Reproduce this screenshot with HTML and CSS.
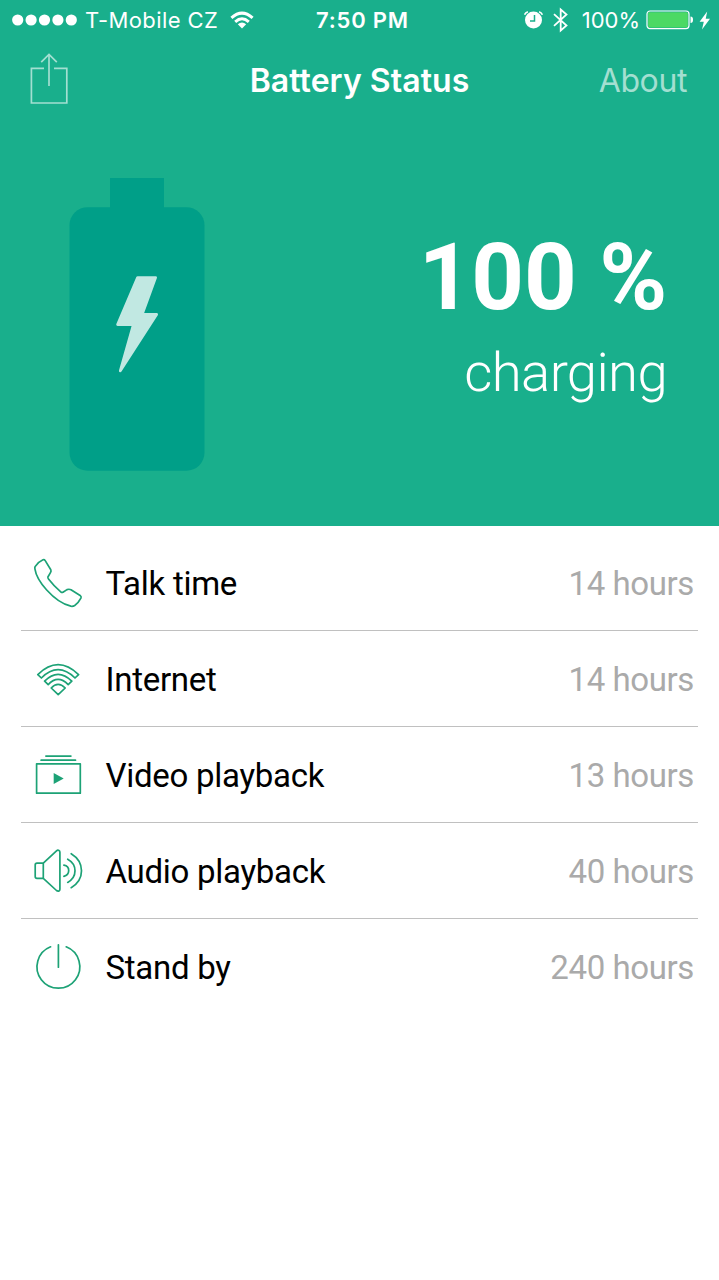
FILE: index.html
```html
<!DOCTYPE html>
<html lang="en">
<head>
<meta charset="utf-8">
<title>Battery Status</title>
<link rel="stylesheet" href="styles.css">
</head>
<body>
<header class="hero">
  <div class="status">
    <div class="status-left">
      <svg class="signal" width="66" height="12" viewBox="0 0 66 12" fill="#fff"><circle cx="6.7" cy="6" r="5.6"/><circle cx="20.1" cy="6" r="5.6"/><circle cx="33.5" cy="6" r="5.6"/><circle cx="46.9" cy="6" r="5.6"/><circle cx="60.3" cy="6" r="5.6"/></svg>
      <span class="carrier">T-Mobile CZ</span>
      <svg class="wifi" width="24" height="18" viewBox="0 0 24 18" fill="none" stroke="#fff" stroke-width="3"><path d="M1.4 6.8Q12-2.6 22.6 6.8M5.2 10.8Q12 4.8 18.8 10.8"/><path d="M12 17.5L7.8 13.3Q12 9.8 16.2 13.3Z" fill="#fff" stroke="none"/></svg>
    </div>
    <span class="clock">7:50 PM</span>
    <div class="status-right">
      <svg width="20" height="20" viewBox="0 0 20 20" fill="none"><circle cx="9.5" cy="10" r="8.5" fill="#fff"/><path d="M10.5 5v6H6" stroke="#19af8c" stroke-width="1.5"/><path d="M.6 4.7Q1.3 2.6 3.9 1.7M15.1 1.7Q17.7 2.6 18.4 4.7" stroke="#fff" stroke-width="1.6"/></svg>
      <svg class="bluetooth" width="16" height="26" viewBox="0 0 16 26" fill="none" stroke="#fff" stroke-width="1.8"><path d="M1 7.2L13.5 18.5L7.7 23.5V2.5L13.5 7.5L1 18.8"/></svg>
      <span class="percent">100%</span>
      <svg class="cell" width="48" height="20" viewBox="0 0 48 20"><rect x="1" y="1" width="42" height="17.6" rx="3" fill="none" stroke="#fff" stroke-width="1.2"/><rect x="2.2" y="2.2" width="39.6" height="15.2" rx="1.4" fill="#4cd964"/><path d="M44.5 6.5Q47 6.5 47 9.8T44.5 13.1Z" fill="#fff"/></svg>
      <svg width="12" height="19" viewBox="0 0 12 19" fill="#fff"><path d="M8.2.5L.6 10.7h4.2L3 18.5L11 7.8H6.7Z"/></svg>
    </div>
  </div>
  <nav class="navbar">
    <svg class="share" width="38" height="52" viewBox="0 0 38 52" fill="none" stroke="#a3dfd1" stroke-width="1.7"><path d="M14 15.4H1.4V50H36.8V15.4H24M19 33V1.5M11.2 9.2L19 1.4L26.8 9.2"/></svg>
    <h1 class="title">Battery Status</h1>
    <span class="about">About</span>
  </nav>
  <div class="summary">
    <svg width="136" height="294" viewBox="0 0 136 294"><rect x=".5" y="29.2" width="135" height="263.5" rx="18" fill="#009f88"/><path d="M41 0h54v32H41z" fill="#009f88"/><path d="M68.6 99.6h18L73.1 136.4H87.6L51.3 192.8L64.4 146.6H48.6Z" fill="#c1e8e2" stroke="#c1e8e2" stroke-width="2.8" stroke-linejoin="round"/></svg>
    <div class="reading">
      <div class="level">100 %</div>
      <div class="state">charging</div>
    </div>
  </div>
</header>
<main class="list">
  <div class="row">
    <svg class="icon" viewBox="0 0 50 50"><path d="M2.1 8.6C4.2 5.4 7 3.1 10 1.8Q11.4 1.4 12.2 2.6L17.8 11.8Q18.4 13 17.6 14.3L14.9 19Q14.7 20 15.5 21C19.3 26 23.2 30 28 34.1Q29 34.8 30 34.2L34 31.6Q36.2 30.8 38 31.8L47.5 37.8Q48.6 38.7 47.9 40.2Q45.6 44.8 41.7 47.5Q40 48.6 37.8 48.2C28.5 46 20.3 39.3 13.7 32C7.6 25.2 3 18.2 1.9 10.8Q1.7 9.5 2.1 8.6Z"/></svg>
    <span class="name">Talk time</span><span class="value">14 hours</span>
  </div>
  <div class="row">
    <svg class="icon" viewBox="0 0 50 50"><path d="M4.8 20.6Q25 .8 45.6 20.6L42 24Q25 7.4 8.4 24ZM11.6 27.2Q25 13.6 38.8 27.2L35.2 30.6Q25 20.2 15.2 30.6ZM18.2 34Q25 26.6 32.2 34L25.2 40.6Z"/></svg>
    <span class="name">Internet</span><span class="value">14 hours</span>
  </div>
  <div class="row">
    <svg class="icon" viewBox="0 0 50 50"><path d="M3.6 13.8H47.3V43.2H3.6ZM8.1 10.2H42.5M12.9 6.1H37.9"/><path d="M20.7 22.9L30.7 28.4L20.7 34Z" fill="#1da276" stroke="none"/></svg>
    <span class="name">Video playback</span><span class="value">13 hours</span>
  </div>
  <div class="row">
    <svg class="icon" viewBox="0 0 50 50"><path d="M10.3 17.2L23.5 4.8Q24.8 3.7 26 4.5Q26.9 5 26.9 6.2V43.2Q26.9 44.4 26 44.9Q24.8 45.5 23.5 44.5L10.3 32.3ZM10.3 17.2H4Q2.2 17.2 2.2 19V30.5Q2.2 32.3 4 32.3H10.3V17.2M30.9 19.2Q35.9 20.2 35.7 24.8Q35.5 29.3 30.9 30.3M34.7 13.2Q42 17.2 42 24.8T34.7 36.4M38.2 7.7Q48.5 14 48.5 24.8T38.2 41.7"/></svg>
    <span class="name">Audio playback</span><span class="value">40 hours</span>
  </div>
  <div class="row">
    <svg class="icon" viewBox="0 0 50 50"><path d="M17.6 4.8A21.4 21.4 0 1 0 33.2 4.8M25.4 2.8V25.2"/></svg>
    <span class="name">Stand by</span><span class="value">240 hours</span>
  </div>
</main>
</body>
</html>
```
FILE: styles.css
```css
* { box-sizing: border-box; }
body { margin: 0; min-height: 1280px; background: #fff; font-family: Roboto, sans-serif; }
svg { display: block; flex: none; }
.hero { height: 526px; background: #19af8c; color: #fff; }
.status { display: grid; grid-template-columns: 1fr auto 1fr; align-items: center; height: 40px; padding: 0 8px 0 11px; font: 400 22px/40px Inter, sans-serif; white-space: nowrap; }
.status-left, .status-right { display: flex; align-items: center; }
.status-right { justify-content: flex-end; }
.carrier { margin-left: 8px; letter-spacing: .4px; }
.wifi { margin-left: 12px; }
.clock { margin-left: 3px; font-weight: 600; letter-spacing: .8px; }
.bluetooth { margin-left: 9px; }
.percent { margin-left: 13px; letter-spacing: 0; }
.cell { margin: 0 5px 0 6px; }
.navbar { display: grid; grid-template-columns: 1fr auto 1fr; height: 82px; padding: 0 32px 0 30px; font: 400 32px/82px Inter, sans-serif; }
.share { margin-top: 13px; }
.title { margin: 0 0 0 2px; font-size: 32px; font-weight: 600; letter-spacing: .05px; }
.about { text-align: right; color: #a3dfd1; letter-spacing: -.4px; }
.summary { display: flex; justify-content: space-between; padding: 56px 52px 0 69px; }
.reading { padding-top: 46px; text-align: right; }
.level { font-size: 92px; font-weight: 700; line-height: 108px; letter-spacing: -.2px; }
.state { font-size: 54.5px; font-weight: 300; line-height: 80px; letter-spacing: -.65px; }
.list { margin: 9px 21px 0; }
.row { display: flex; align-items: center; height: 96px; padding: 1px 4px 0 12px; border-bottom: 1px solid #c0c0c0; font-size: 33px; color: #000; }
.row:last-child { border-bottom: 0; padding-top: 0; }
.icon { width: 50px; height: 50px; fill: none; stroke: #1da276; stroke-width: 1.7; stroke-linecap: round; stroke-linejoin: round; }
.name { margin-left: 22.5px; letter-spacing: -.27px; }
.value { margin-left: auto; color: #aaa; letter-spacing: -.4px; }
```
